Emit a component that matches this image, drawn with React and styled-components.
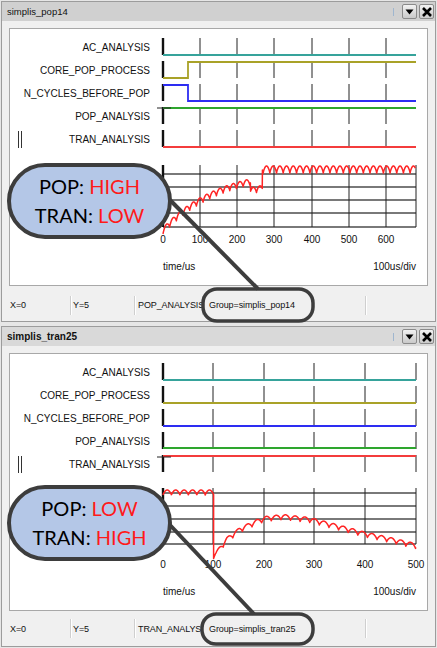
import React from "react";
import styled, { createGlobalStyle } from "styled-components";

const GlobalStyle = createGlobalStyle`
  html, body { margin: 0; padding: 0; }
  body {
    background: #e6e6e6;
    font-family: "Liberation Sans", Arial, sans-serif;
    color: #000;
  }
`;

const Page = styled.div`
  width: 437px;
  height: 648px;
  box-sizing: border-box;
  padding: 1px 1px 0 1px;
  display: flex;
  flex-direction: column;
  gap: 4px;
  overflow: hidden;
`;

const Panel = styled.section`
  position: relative;
  border: 1px solid #9c9c9c;
  background: #f0f0f0;
  display: flex;
  flex-direction: column;
`;

const TitleBar = styled.header`
  height: 19px;
  display: flex;
  align-items: center;
  justify-content: space-between;
  padding: 0 1px 0 5px;
  background: ${(p) => (p.$active ? "#d9d9d9" : "#d0d0d0")};
`;

const Title = styled.span`
  font-size: ${(p) => (p.$active ? "10px" : "9.5px")};
  font-weight: ${(p) => (p.$active ? 700 : 400)};
  color: #111;
`;

const TitleTools = styled.div`
  display: flex;
  align-items: center;
  gap: 2px;
`;

const Grip = styled.span`
  width: 1px;
  height: 8px;
  background: #9fb6cf;
  margin-right: 6px;
`;

const ToolButton = styled.span`
  width: 15px;
  height: 15px;
  box-sizing: border-box;
  border: 1px solid #8a8a8a;
  border-radius: 2px;
  background: linear-gradient(#f2f2f2, #c9c9c9);
  display: flex;
  align-items: center;
  justify-content: center;
`;

const PanelBody = styled.div`
  padding: 7px 7px 0 7px;
`;

const PlotBox = styled.div`
  height: 258px;
  box-sizing: border-box;
  border: 1px solid #a8a8a8;
  background: #fff;
  display: flex;
  flex-direction: column;
`;

const ChartRow = styled.div`
  display: flex;
  height: 222px;
`;

const SignalColumn = styled.div`
  width: 140px;
  padding-top: 6.5px;
  display: flex;
  flex-direction: column;
`;

const SignalRow = styled.div`
  height: 23px;
  display: flex;
  align-items: center;
  justify-content: space-between;
  padding-left: 8px;
  font-size: 10px;
  color: #111;
`;

const GroupMark = styled.span`
  width: 2px;
  height: 17px;
  border-left: 1px solid #333;
  border-right: 1px solid #333;
`;

const AxisFooter = styled.div`
  margin-top: 10px;
  padding: 0 11px 0 153px;
  display: flex;
  justify-content: space-between;
  font-size: 10px;
  line-height: 12px;
  color: #111;
`;

const StatusBar = styled.footer`
  height: 35px;
  display: flex;
  align-items: center;
  padding-top: ${(p) => (p.$tight ? "0px" : "3px")};
  box-sizing: border-box;
  font-size: 9px;
  letter-spacing: -0.1px;
`;

const StatusCell = styled.span`
  width: ${(p) => p.$w}px;
  height: 19px;
  box-sizing: border-box;
  padding-left: ${(p) => p.$pad}px;
  display: flex;
  align-items: center;
  white-space: nowrap;
  overflow: hidden;
  border-right: ${(p) => (p.$last ? "none" : "1px solid #cfcfcf")};
  box-shadow: ${(p) => (p.$last ? "none" : "1px 0 0 #ffffff")};
  color: #111;
`;

const Bubble = styled.div`
  position: absolute;
  left: 5px;
  top: ${(p) => p.$top}px;
  width: 165px;
  height: 76px;
  box-sizing: border-box;
  border: 4px solid #3d3d3d;
  border-radius: 38px;
  background: #b4c7e7;
  display: flex;
  flex-direction: column;
  align-items: center;
  justify-content: center;
  font-family: Lato, "Open Sans", sans-serif;
  font-size: 20px;
  line-height: 29px;
  color: #000;
`;

const Hot = styled.span`
  color: #ff1a1a;
`;

const Overlay = styled.svg`
  position: absolute;
  left: 0;
  top: 0;
  width: 100%;
  height: 100%;
  pointer-events: none;
  overflow: visible;
`;

const COLORS = {
  teal: "#36a39b",
  olive: "#a9a228",
  blue: "#2d2df2",
  green: "#2ea62e",
  red: "#f43c3c",
};

const SIGNALS = [
  "AC_ANALYSIS",
  "CORE_POP_PROCESS",
  "N_CYCLES_BEFORE_POP",
  "POP_ANALYSIS",
  "TRAN_ANALYSIS",
];

// rounded-top ripple with a cusp at each switching edge
const arch = (t, period) => {
  const s = Math.abs(Math.sin((Math.PI * t) / period));
  return 1 - Math.pow(s, 0.8);
};

const interp = (table, t) => {
  for (let i = 1; i < table.length; i++) {
    if (t <= table[i][0]) {
      const [t0, y0] = table[i - 1];
      const [t1, y1] = table[i];
      return y0 + ((y1 - y0) * (t - t0)) / (t1 - t0);
    }
  }
  return table[table.length - 1][1];
};

// Inductor current settling after the POP start-up (steady ripple from ~270us)
function popWave() {
  const pts = [];
  for (let t = 0; t <= 680; t += 0.5) {
    let top;
    let h;
    if (t < 268) {
      top = 166 + (228 - 166) * Math.exp(-t / 150);
      if (t >= 236) top += 9;
      h = 6;
    } else {
      top = 166;
      h = 7;
    }
    pts.push([163 + t * 0.371, top + h * arch(t, 18)]);
  }
  return pts;
}

// Transient run: held level until 100us, then a sag and slow recovery
function tranWave() {
  const pts = [];
  for (let t = 0; t <= 100; t += 0.5) {
    pts.push([163 + t * 0.506, 490 + 5 * arch(t, 16.7)]);
  }
  const table = [
    [100, 556], [105, 554], [126, 540], [152, 530], [186, 522], [202, 519],
    [237, 517], [290, 520], [344, 527], [395, 534], [449, 540], [500, 546],
  ];
  for (let t = 100; t <= 500; t += 0.5) {
    const mid = interp(table, t);
    pts.push([163 + t * 0.506, mid - 2.5 + 5 * arch(t - 100, 19)]);
  }
  return pts;
}

const toPath = (pts) => pts.map(([x, y], i) => `${i ? "L" : "M"}${x.toFixed(2)} ${y.toFixed(2)}`).join(" ");

const PANELS = [
  {
    name: "simplis_pop14",
    active: false,
    boxTop: 29,
    ticks: [200, 237, 274, 312, 349, 386],
    labels: ["0", "100", "200", "300", "400", "500", "600"],
    rowTops: [38, 61, 84, 107, 130],
    traces: [
      { c: "teal", pts: [[163, 55], [416, 55]] },
      { c: "olive", pts: [[163, 78], [188, 78], [188, 62], [416, 62]] },
      { c: "blue", pts: [[163, 85], [188, 85], [188, 101], [416, 101]] },
      { c: "green", pts: [[163, 108], [416, 108]] },
      { c: "red", pts: [[163, 147], [416, 147]] },
    ],
    crossY: 108,
    gridTop: 165,
    hLines: [174, 187, 200, 213, 227],
    labelY: 243,
    wave: popWave(),
    status: "POP_ANALYSIS",
    bubble: { top: 161, pop: "HIGH", tran: "LOW" },
    link: { x1: 168, y1: 198, x2: 256, y2: 287 },
    frame: { x: 201, y: 287, w: 110, h: 32 },
  },
  {
    name: "simplis_tran25",
    active: true,
    tight: true,
    boxTop: 354,
    ticks: [213, 264, 314, 365],
    labels: ["0", "100", "200", "300", "400", "500"],
    rowTops: [363, 386, 409, 432, 455],
    traces: [
      { c: "teal", pts: [[163, 380], [416, 380]] },
      { c: "olive", pts: [[163, 403], [416, 403]] },
      { c: "blue", pts: [[163, 426], [416, 426]] },
      { c: "green", pts: [[163, 448], [416, 448]] },
      { c: "red", pts: [[163, 456], [416, 456]] },
    ],
    crossY: 457,
    gridTop: 488,
    hLines: [493, 506, 519, 532, 544],
    labelY: 568,
    wave: tranWave(),
    status: "TRAN_ANALYSIS",
    bubble: { top: 158, pop: "LOW", tran: "HIGH" },
    link: { x1: 168, y1: 198, x2: 252, y2: 287 },
    frame: { x: 200, y: 287, w: 111, h: 30 },
  },
];

function Chart({ p }) {
  const allTicks = [...p.ticks, 416];
  const labelXs = [163, ...allTicks].slice(0, p.labels.length);
  const bottom = p.hLines[p.hLines.length - 1];
  return (
    <svg width="277" height="222" viewBox="0 0 277 222">
      <g transform={`translate(-150 ${-p.boxTop})`}>
        {/* digital rows: axis stubs and division ticks */}
        {p.rowTops.map((top) => (
          <g key={top}>
            <line x1="163" y1={top} x2="163" y2={top + 17} stroke="#111" strokeWidth="2.4" />
            {p.ticks.map((x) => (
              <line key={x} x1={x} y1={top} x2={x} y2={top + 17} stroke="#222" strokeWidth="1" />
            ))}
            {p.ticks.length === 4 && (
              <line x1="416" y1={top} x2="416" y2={top + 17} stroke="#222" strokeWidth="1" />
            )}
          </g>
        ))}
        {p.traces.map((tr) => (
          <polyline
            key={tr.c}
            points={tr.pts.map((pt) => pt.join(",")).join(" ")}
            fill="none"
            stroke={COLORS[tr.c]}
            strokeWidth="1.8"
          />
        ))}
        <line x1="157" y1={p.crossY} x2="171" y2={p.crossY} stroke="#222" strokeWidth="1" />

        {/* analog plot grid */}
        {p.hLines.map((y) => (
          <line key={y} x1="163" y1={y} x2="416" y2={y} stroke="#4d4d4d" strokeWidth="1.5" />
        ))}
        <line x1="163" y1={p.gridTop} x2="163" y2={bottom} stroke="#111" strokeWidth="2.4" />
        {allTicks.map((x) => (
          <line key={x} x1={x} y1={p.gridTop} x2={x} y2={bottom} stroke="#222" strokeWidth="1" />
        ))}
        <path d={toPath(p.wave)} fill="none" stroke="#ff2424" strokeWidth="1.5" strokeLinejoin="round" />
        {p.labels.map((l, i) => (
          <text
            key={l}
            x={labelXs[i]}
            y={p.labelY}
            textAnchor="middle"
            fontSize="10"
            fontFamily="'Liberation Sans', Arial, sans-serif"
            fill="#111"
          >
            {l}
          </text>
        ))}
      </g>
    </svg>
  );
}

function ScopePanel({ p }) {
  return (
    <Panel>
      <TitleBar $active={p.active}>
        <Title $active={p.active}>{p.name}</Title>
        <TitleTools>
          <Grip />
          <ToolButton>
            <svg width="9" height="6" viewBox="0 0 9 6">
              <path d="M0.5 0.5 H8.5 L4.5 5.5 Z" fill="#000" />
            </svg>
          </ToolButton>
          <ToolButton>
            <svg width="10" height="10" viewBox="0 0 10 10">
              <path d="M1 1 L9 9 M9 1 L1 9" stroke="#000" strokeWidth="2.6" />
            </svg>
          </ToolButton>
        </TitleTools>
      </TitleBar>
      <PanelBody>
        <PlotBox>
          <ChartRow>
            <SignalColumn>
              {SIGNALS.map((s, i) => (
                <SignalRow key={s}>
                  {i === 4 ? <GroupMark /> : <span />}
                  <span>{s}</span>
                </SignalRow>
              ))}
            </SignalColumn>
            <Chart p={p} />
          </ChartRow>
          <AxisFooter>
            <span>time/us</span>
            <span>100us/div</span>
          </AxisFooter>
        </PlotBox>
      </PanelBody>
      <StatusBar $tight={p.tight}>
        <StatusCell $w={69} $pad={8}>X=0</StatusCell>
        <StatusCell $w={64} $pad={2}>Y=5</StatusCell>
        <StatusCell $w={68} $pad={3}>{p.status}</StatusCell>
        <StatusCell $w={163} $pad={6}>Group={p.name}</StatusCell>
        <StatusCell $w={60} $pad={4} $last />
      </StatusBar>

      <Overlay>
        <line
          x1={p.link.x1}
          y1={p.link.y1}
          x2={p.link.x2}
          y2={p.link.y2}
          stroke="#3d3d3d"
          strokeWidth="4"
        />
        <rect
          x={p.frame.x}
          y={p.frame.y}
          width={p.frame.w}
          height={p.frame.h}
          rx="14"
          fill="none"
          stroke="#3d3d3d"
          strokeWidth="3.5"
        />
      </Overlay>
      <Bubble $top={p.bubble.top}>
        <span>
          POP: <Hot>{p.bubble.pop}</Hot>
        </span>
        <span>
          TRAN: <Hot>{p.bubble.tran}</Hot>
        </span>
      </Bubble>
    </Panel>
  );
}

export default function App() {
  return (
    <>
      <GlobalStyle />
      <Page>
        {PANELS.map((p) => (
          <ScopePanel key={p.name} p={p} />
        ))}
      </Page>
    </>
  );
}
